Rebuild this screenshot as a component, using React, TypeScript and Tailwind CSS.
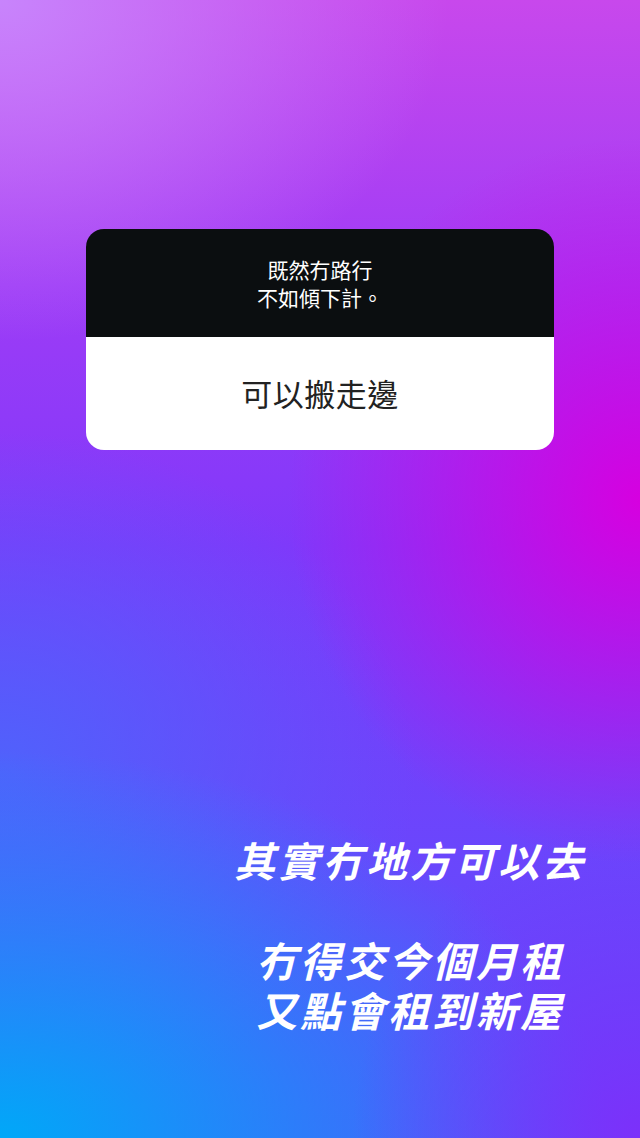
export default function App() {
  return (
    <div
      className="relative flex h-[1138px] w-[640px] flex-col overflow-hidden bg-[radial-gradient(ellipse_55%_32%_at_100%_44%,#d600e0_0%,rgba(214,0,224,0)_100%),radial-gradient(ellipse_45%_28%_at_100%_100%,#7c30fa_0%,rgba(124,48,250,0)_100%),radial-gradient(ellipse_95%_34%_at_0%_100%,#00a8f8_0%,rgba(0,168,248,0)_100%),radial-gradient(ellipse_65%_30%_at_0%_68%,#4f62fc_0%,rgba(79,98,252,0)_100%),radial-gradient(ellipse_70%_30%_at_0%_0%,#c884fc_0%,rgba(200,132,252,0)_100%),linear-gradient(180deg,#c848ec_0%,#9e3cf6_25%,#8038fa_48%,#6a46fc_75%,#5a50fc_100%)]"
      style={{ fontFamily: '"Noto Sans CJK TC", "Noto Sans CJK SC", sans-serif' }}
    >
      {/* question card */}
      <div className="mx-[86px] mt-[229px] overflow-hidden rounded-[18px]">
        <div className="flex h-[108px] flex-col items-center justify-center bg-[#0b0e10] text-[21px] leading-[28px] text-white">
          <span>既然冇路行</span>
          <span>不如傾下計。</span>
        </div>
        <div className="flex h-[113px] items-center justify-center bg-white text-[31px] tracking-[0.5px] text-[#222222]">
          可以搬走邊
        </div>
      </div>

      {/* caption */}
      <div className="ml-[200px] mt-[384px] w-[420px] whitespace-pre text-center text-[41px] font-semibold italic leading-[50px] tracking-[3px] text-white">
        {'其實冇地方可以去\n\n冇得交今個月租\n又點會租到新屋'}
      </div>
    </div>
  );
}
